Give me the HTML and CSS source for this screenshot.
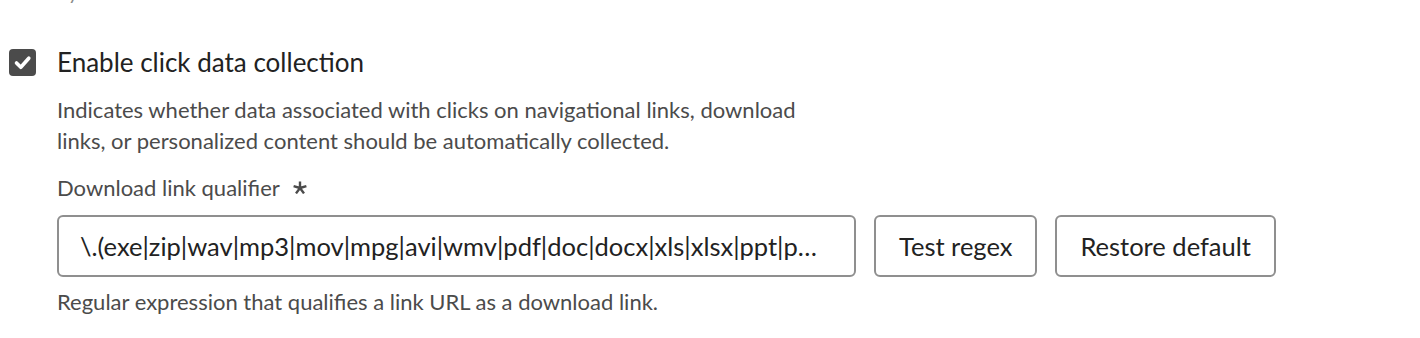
FILE: index.html
```html
<!DOCTYPE html>
<html lang="en">

<head>
    <meta charset="utf-8">
    <meta name="viewport" content="width=device-width, initial-scale=1.0">
    <title>Click data collection</title>
    <link rel="stylesheet" href="styles.css">
</head>

<body>
    <div class="forrige"><span>by</span></div>

    <section class="indstilling">
        <label class="afkryds">
            <span class="boks">
                <svg width="27" height="27" viewBox="0 0 27 27">
                    <path d="M7.5 14 L11.8 18.3 L19.8 9.2" fill="none" stroke="#fff" stroke-width="3.6" stroke-linecap="round" stroke-linejoin="round"/>
                </svg>
            </span>
            <span class="titel">Enable click data collection</span>
        </label>

        <div class="indhold">
            <p class="beskrivelse">Indicates whether data associated with clicks on navigational links, download<br>links, or personalized content should be automatically collected.</p>

            <div class="felt-label">Download link qualifier
                <svg class="krav" width="14" height="13" viewBox="0 0 14 13">
                    <path d="M7 7 L7 0.6 M7 7 L0.6 5.1 M7 7 L13.4 5.1 M7 7 L3 12.4 M7 7 L11 12.4" stroke="#4b4b4b" stroke-width="2.4" stroke-linecap="butt" fill="none"/>
                </svg>
            </div>

            <div class="raekke">
                <input class="tekstfelt" type="text" value="\.(exe|zip|wav|mp3|mov|mpg|avi|wmv|pdf|doc|docx|xls|xlsx|ppt|pptx|gz|tgz|gzip)$">
                <button class="knap">Test regex</button>
                <button class="knap">Restore default</button>
            </div>

            <p class="hjaelp">Regular expression that qualifies a link URL as a download link.</p>
        </div>
    </section>
</body>

</html>
```

FILE: styles.css
```css
body {
    margin: 0;
    font-family: "Lato", "Open Sans", sans-serif;
    color: #222;
    background: #fff;
}

.forrige {
    height: 5px;
    overflow: hidden;
    margin-left: 57px;
    color: #8a8a8a;
    font-size: 20px;
    line-height: 20px;
}

.forrige span {
    display: block;
    margin-top: -18px;
}

.indstilling {
    padding-top: 43px;
}

.afkryds {
    display: flex;
    align-items: center;
    height: 28px;
    margin-left: 9px;
}

.boks {
    width: 27px;
    height: 27px;
    background: #4b4b4b;
    border-radius: 4px;
    display: flex;
}

.titel {
    margin-left: 21px;
    font-size: 26px;
}

.indhold {
    margin-left: 57px;
}

.beskrivelse {
    margin: 18px 0 0;
    font-size: 22px;
    line-height: 31px;
    color: #4b4b4b;
}

.felt-label {
    margin-top: 18px;
    font-size: 22px;
    line-height: 28px;
    color: #4b4b4b;
}

.krav {
    margin-left: 8px;
    vertical-align: 2px;
}

.raekke {
    display: flex;
    gap: 18px;
    margin-top: 13px;
}

.tekstfelt {
    width: 799px;
    height: 62px;
    box-sizing: border-box;
    border: 2px solid #8f8f8f;
    border-radius: 6px;
    padding: 0 32px 0 21px;
    font-family: inherit;
    font-size: 25.5px;
    color: #222;
    text-overflow: ellipsis;
    outline: none;
}

.knap {
    height: 62px;
    box-sizing: border-box;
    border: 2px solid #8f8f8f;
    border-radius: 6px;
    background: #fff;
    padding: 0 23px;
    font-family: inherit;
    font-size: 25.5px;
    color: #222;
}

.hjaelp {
    margin: 11px 0 0;
    font-size: 22px;
    line-height: 28px;
    color: #4b4b4b;
}
```
